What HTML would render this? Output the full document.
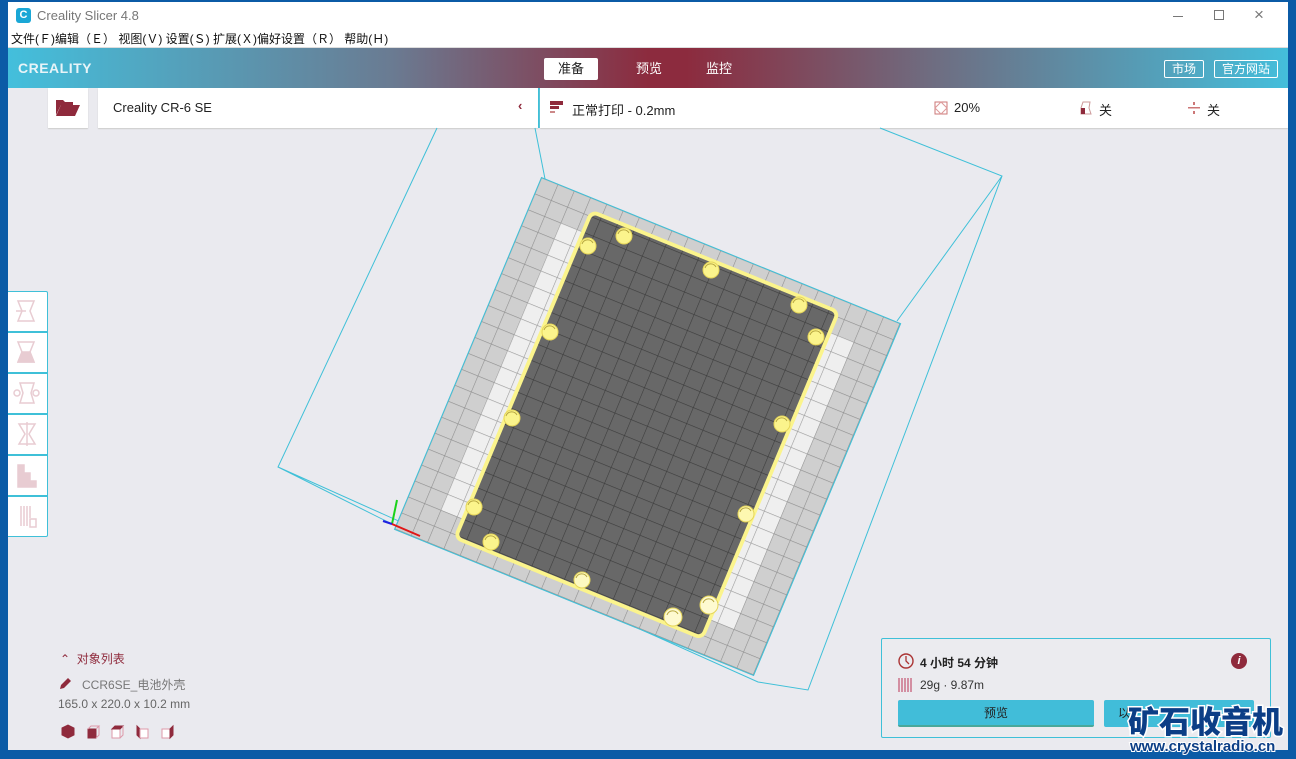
<!DOCTYPE html>
<html><head><meta charset="utf-8">
<style>
*{margin:0;padding:0;box-sizing:border-box}
html,body{width:1296px;height:759px;overflow:hidden}
body{background:#0b5ba6;font-family:"Liberation Sans","Noto Sans CJK SC",sans-serif;position:relative}
.win{position:absolute;left:8px;top:2px;width:1280px;height:748px;background:#eaeaef;overflow:hidden}
.title{position:absolute;left:0;top:0;width:1280px;height:28px;background:#fff;font-size:13px;color:#777}
.menu{position:absolute;left:0;top:28px;width:1280px;height:18px;background:#fff;font-size:12px;color:#111;line-height:18px;padding-left:3px;border-bottom:1px solid #ddd;white-space:nowrap}
.bar{position:absolute;left:0;top:46px;width:1280px;height:40px;background:linear-gradient(90deg,#43bfdc 0%,#6a7b92 30%,#8c2b3e 50%,#8c2b3e 53%,#6f6c80 72%,#44bedb 100%)}
.tab{position:absolute;top:10px;height:22px;line-height:22px;font-size:13px;color:#fff;text-align:center}
.ob{position:absolute;top:12px;height:18px;line-height:16px;border:1px solid #fff;border-radius:2px;color:#fff;font-size:12px;text-align:center}
.row2{position:absolute;top:86px;height:40px;background:#fff;box-shadow:0 1px 1px #ccc}
.tool{position:absolute;left:0;width:40px;height:41px;background:#fff;border:1px solid #3fc0d8;border-left:none}
.btm{font-size:12px;color:#555;position:absolute;white-space:nowrap}
</style></head><body>
<div class="win">
 <div class="title">
  <div style="position:absolute;left:8px;top:6px;width:15px;height:15px;background:#1aa7d6;border-radius:3px;color:#fff;font-size:11px;font-weight:bold;text-align:center;line-height:15px">C</div>
  <span style="position:absolute;left:29px;top:6px">Creality Slicer 4.8</span>
  <div style="position:absolute;left:1165px;top:14px;width:10px;height:1px;background:#777"></div>
  <div style="position:absolute;left:1206px;top:8px;width:10px;height:10px;border:1px solid #777"></div>
  <span style="position:absolute;left:1246px;top:3px;font-size:17px;color:#777">×</span>
 </div>
 <div class="menu">文件(Ｆ)编辑（Ｅ） 视图(Ｖ) 设置(Ｓ) 扩展(Ｘ)偏好设置（Ｒ） 帮助(Ｈ)</div>
 <div class="bar">
  <span style="position:absolute;left:10px;top:12px;color:#e8f4f8;font-weight:bold;font-size:14px;letter-spacing:0.5px">CREALITY</span>
  <div class="tab" style="left:536px;width:54px;background:#fff;color:#222;border-radius:2px">准备</div>
  <div class="tab" style="left:614px;width:54px">预览</div>
  <div class="tab" style="left:684px;width:54px">监控</div>
  <div class="ob" style="left:1156px;width:40px">市场</div>
  <div class="ob" style="left:1206px;width:64px">官方网站</div>
 </div>
 <div class="row2" style="left:40px;width:40px">
  <svg width="40" height="40"><path d="M8 12h7l2 2h8v3H13l-5 10z" fill="#8f2a3c"/><path d="M13 17h19l-5 11H8z" fill="#8f2a3c"/></svg>
 </div>
 <div class="row2" style="left:90px;width:440px;font-size:13px;color:#222">
  <span style="position:absolute;left:15px;top:12px">Creality CR-6 SE</span>
  <span style="position:absolute;left:420px;top:10px;color:#8f2a3c;font-weight:bold">‹</span>
 </div>
 <div style="position:absolute;left:530px;top:86px;width:2px;height:40px;background:#3fc0d8"></div>
 <div class="row2" style="left:532px;width:748px;font-size:13px;color:#222">
  <svg style="position:absolute;left:10px;top:13px" width="14" height="14"><rect x="0" y="0" width="13" height="4" fill="#8f2a3c"/><rect x="0" y="5" width="9" height="3" fill="#8f2a3c"/><rect x="0" y="10" width="5" height="2" fill="#c88"/></svg>
  <span style="position:absolute;left:32px;top:12px">正常打印 - 0.2mm</span>
  <svg style="position:absolute;left:394px;top:13px" width="14" height="14"><rect x="1" y="1" width="12" height="12" fill="none" stroke="#c77" /><path d="M1 7L7 1L13 7L7 13Z" fill="none" stroke="#d99"/></svg>
  <span style="position:absolute;left:414px;top:12px">20%</span>
  <svg style="position:absolute;left:540px;top:13px" width="12" height="14"><path d="M3 1h7l-1 6 2 6H1V7z" fill="none" stroke="#c99"/><path d="M1 7h4v6H1z" fill="#8f2a3c"/></svg>
  <span style="position:absolute;left:559px;top:12px">关</span>
  <svg style="position:absolute;left:648px;top:13px" width="12" height="14"><rect x="0" y="6" width="12" height="1.5" fill="#c77"/><rect x="5" y="1" width="2" height="3" fill="#c77"/><rect x="5" y="10" width="2" height="3" fill="#c77"/></svg>
  <span style="position:absolute;left:667px;top:12px">关</span>
 </div>
 <div style="position:absolute;left:0;top:289px">
  <div class="tool" style="top:0;border-radius:0 2px 0 0"></div>
  <div class="tool" style="top:41px"></div>
  <div class="tool" style="top:82px"></div>
  <div class="tool" style="top:123px"></div>
  <div class="tool" style="top:164px"></div>
  <div class="tool" style="top:205px;border-radius:0 0 2px 0"></div>
  <svg style="position:absolute;left:0;top:0" width="40" height="246" fill="none" stroke="#e8ccd2" stroke-width="1.5">
   <path d="M10 10h16l-4 10 4 10H10l4-10z"/><path d="M8 20h10"/>
   <path d="M10 51h16l-4 10 4 10H10l4-10z"/><path d="M10 71l4-10h8l4 10z" fill="#e8ccd2"/>
   <path d="M12 92h14l-3 10 3 10H12l3-10z"/><circle cx="9" cy="102" r="3"/><circle cx="28" cy="102" r="3"/>
   <path d="M11 133h16l-6 10 6 10H11l6-10z"/><path d="M19 131v24"/>
   <path d="M10 174h6v8h6v8h6v6H10z" fill="#e8ccd2"/>
   <path d="M13 215v20M16 215v20M19 215v20M22 215v12M22 228h6v8h-6z"/>
  </svg>
 </div>
 <svg style="position:absolute;left:-8px;top:-2px" width="1296" height="759">
  <defs>
   <pattern id="g1" width="13.6" height="13.6" patternUnits="userSpaceOnUse"><rect width="13.6" height="13.6" fill="#cfcfcf"/><path d="M0 0H13.6M0 0V13.6" stroke="#8e8e8e" stroke-width="0.9"/></pattern>
   <pattern id="g2" width="13.6" height="13.6" patternUnits="userSpaceOnUse"><rect width="13.6" height="13.6" fill="#efefef"/><path d="M0 0H13.6M0 0V13.6" stroke="#9a9a9a" stroke-width="0.9"/></pattern>
   <pattern id="g3" width="13.6" height="13.6" patternUnits="userSpaceOnUse"><rect width="13.6" height="13.6" fill="#686868"/><path d="M0 0H13.6M0 0V13.6" stroke="#3c3c3c" stroke-width="0.9"/></pattern>
  </defs>
  <g fill="none" stroke="#3fc0d8" stroke-width="1">
   <path d="M437 128L278 467L390 523M278 467L758 682L808 690L1002 176L880 128M1002 176L897 321M535 128L546 184"/>
  </g>
  <g transform="matrix(1.197,0.487,-0.49,1.173,541.5,177.5)">
   <rect x="0" y="0" width="300" height="300" fill="url(#g1)" stroke="#3fc0d8" stroke-width="0.8"/>
   <rect x="27.2" y="27.2" width="245" height="245" fill="url(#g2)"/>
   <rect x="46" y="10" width="206" height="278" rx="5" fill="url(#g3)" stroke="#fbf48c" stroke-width="3"/>
  </g>
  <g stroke="#e6d65a" stroke-width="1" fill="#fbf48c">
   <circle cx="588" cy="246" r="8"/><circle cx="624" cy="236" r="8"/><circle cx="711" cy="270" r="8"/>
   <circle cx="799" cy="305" r="8"/><circle cx="816" cy="337" r="8"/><circle cx="550" cy="332" r="8"/>
   <circle cx="512" cy="418" r="8"/><circle cx="782" cy="424" r="8"/><circle cx="474" cy="507" r="8"/>
   <circle cx="746" cy="514" r="8" fill="#fdf8b0"/><circle cx="491" cy="542" r="8"/><circle cx="582" cy="580" r="8" fill="#fdf9c0"/>
   <circle cx="673" cy="617" r="9" fill="#fefad0"/><circle cx="709" cy="605" r="9" fill="#fefad0"/>
  </g>
  <g fill="none" stroke="#b8a840" stroke-width="1">
   <path d="M582 244a6 6 0 0 1 11-1M618 234a6 6 0 0 1 11-1M705 268a6 6 0 0 1 11-1M793 303a6 6 0 0 1 11-1M810 335a6 6 0 0 1 11-1M544 330a6 6 0 0 1 11-1M506 416a6 6 0 0 1 11-1M776 422a6 6 0 0 1 11-1M468 505a6 6 0 0 1 11-1M485 540a6 6 0 0 1 11-1M576 578a6 6 0 0 1 11-1M667 615a6 6 0 0 1 11-1M703 603a6 6 0 0 1 11-1M740 512a6 6 0 0 1 11-1"/>
  </g>
  <path d="M392 524L397 500" stroke="#1ad21a" stroke-width="2"/>
  <path d="M392 524L420 536" stroke="#e01616" stroke-width="2"/>
  <path d="M392 524L383 521" stroke="#2020e0" stroke-width="2"/>
 </svg>
 <div class="btm" style="left:52px;top:648px;color:#8f2a3c;font-size:12px">⌃&nbsp;&nbsp;对象列表</div>
 <svg style="position:absolute;left:51px;top:675px" width="13" height="13"><path d="M1 12l1-4 7-7 3 3-7 7z" fill="#8f2a3c"/></svg>
 <div class="btm" style="left:74px;top:674px;color:#777">CCR6SE_电池外壳</div>
 <div class="btm" style="left:50px;top:695px;color:#666">165.0 x 220.0 x 10.2 mm</div>
 <svg style="position:absolute;left:52px;top:722px" width="120" height="16" fill="#fff" stroke="#8f2a3c">
  <path d="M2 4l6-3 6 3v7l-6 3-6-3z" fill="#8f2a3c"/>
  <path d="M28 5h8v9h-8z" fill="#8f2a3c"/><path d="M28 5l3-3h8l-3 3M36 14l3-3V2" fill="none" stroke="#d9a"/>
  <path d="M52 5h8v9h-8z" stroke="#d9a"/><path d="M52 5l3-3h8l-3 3z" fill="#8f2a3c"/><path d="M60 14l3-3V2" fill="none" stroke="#d9a"/>
  <path d="M77 2l3 3v9l-3-3z" fill="#8f2a3c"/><path d="M80 5h8v9h-8z" stroke="#d9a"/>
  <path d="M102 5h8v9h-8z" stroke="#d9a"/><path d="M110 14l3-3V2l-3 3z" fill="#8f2a3c"/>
 </svg>
 <div style="position:absolute;left:873px;top:636px;width:390px;height:100px;border:1px solid #3fc0d8;border-radius:2px;background:#ebebef">
  <svg style="position:absolute;left:16px;top:14px" width="16" height="16"><circle cx="8" cy="8" r="7" fill="none" stroke="#a33" stroke-width="1.4"/><path d="M8 3v5l3 3" stroke="#a33" fill="none" stroke-width="1.3"/></svg>
  <span style="position:absolute;left:38px;top:15px;font-size:12px;font-weight:bold;color:#222">4 小时 54 分钟</span>
  <div style="position:absolute;left:349px;top:14px;width:16px;height:16px;border-radius:50%;background:#8f2a3c;color:#fff;font-size:11px;font-weight:bold;text-align:center;line-height:16px;font-style:italic">i</div>
  <svg style="position:absolute;left:16px;top:38px" width="14" height="16" stroke="#b35"><path d="M1 1v14M4 1v14M7 1v14M10 1v14M13 1v14"/></svg>
  <span style="position:absolute;left:38px;top:39px;font-size:12px;color:#333">29g · 9.87m</span>
  <div style="position:absolute;left:16px;top:61px;width:196px;height:27px;background:#41bdd9;border-bottom:2px solid #4aa89a;border-radius:2px;text-align:center;line-height:26px;font-size:12px;color:#222">预览</div>
  <div style="position:absolute;left:222px;top:61px;width:150px;height:27px;background:#41bdd9;border-radius:2px;line-height:26px;font-size:12px;color:#222;padding-left:14px">以</div>
 </div>
</div>
<div style="position:absolute;left:1128px;top:700px;font-size:31px;font-weight:900;color:#0c3e86;letter-spacing:0;line-height:40px;white-space:nowrap;-webkit-text-stroke:3px #fff;paint-order:stroke;font-family:'Noto Sans CJK SC',sans-serif">矿石收音机</div>
<div style="position:absolute;left:1130px;top:738px;font-size:15px;font-weight:bold;color:#0c3e86;line-height:18px;white-space:nowrap;-webkit-text-stroke:2px #fff;paint-order:stroke">www.crystalradio.cn</div>
</body></html>
